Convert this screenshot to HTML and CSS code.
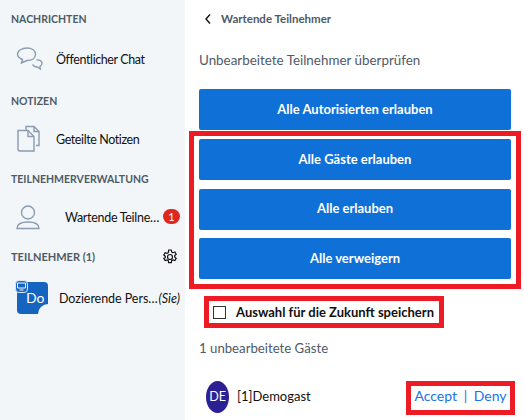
FILE: index.html
```html
<!DOCTYPE html>
<html lang="de">
<head>
    <meta charset="UTF-8">
    <title>Wartende Teilnehmer</title>
    <link rel="stylesheet" href="styles.css">
</head>
<body>

    <!-- Sidebar -->
    <div class="sidebar">
        <h3 class="first">NACHRICHTEN</h3>
        <div class="item">
            <svg class="icon" width="28" height="28" viewBox="0 0 28 28" fill="none" stroke="#8b9bb0" stroke-width="1.4">
                <path d="M11 3c5 0 8.500 2.500 8.500 6.300s-3.500 6.200-8.500 6.200l-5.500 2.500 1-3.500C4 13.500 1.500 12 1.500 9.300 1.500 5.500 6 3 11 3z"/>
                <path d="M20.500 15c3-.5 5.500 1 5.500 3.300 0 1.500-1 2.500-2 3l.3 2.700-3-2c-2.300 0-4-1-4.800-2.500"/>
            </svg>
            <span class="label">Öffentlicher Chat</span>
        </div>
        <h3 class="notes-head">NOTIZEN</h3>
        <div class="item">
            <svg class="icon" width="28" height="28" viewBox="0 0 28 28" fill="none" stroke="#8b9bb0" stroke-width="1.4">
                <path d="M10 5V1.500h8l5 5V20.500h-3"/>
                <path d="M2 5.500h10l6 6v14.500H4a2 2 0 0 1-2-2z"/>
                <path d="M12 5.500v6h6M18 1.500v5h5"/>
            </svg>
            <span class="label">Geteilte Notizen</span>
        </div>
        <h3>TEILNEHMERVERWALTUNG</h3>
        <div class="item">
            <svg class="icon person" width="24" height="26" viewBox="0 0 24 26" fill="none" stroke="#8b9bb0" stroke-width="1.4">
                <circle cx="12" cy="8.500" r="6.500"/>
                <path d="M1 24.500c0-4 4-6.500 11-6.500s11 2.500 11 6.500z"/>
            </svg>
            <span class="label wait-label">Wartende Teilne…</span>
            <span class="badge">1</span>
        </div>
        <div class="users-head">
            <h3>TEILNEHMER (1)</h3>
            <svg width="16" height="16" viewBox="0 0 16 16" fill="none" stroke="#111" stroke-width="1.200">
                <path d="M6.700 1h2.600l.4 2 1.300.7 1.900-.7 1.300 2.300-1.500 1.300v1.400l1.500 1.300-1.300 2.300-1.900-.7-1.300.7-.4 2H6.700l-.4-2-1.300-.7-1.900.7-1.300-2.300L3.300 8.700V7.300L1.800 6l1.300-2.300 1.900.7 1.300-.7z"/>
                <circle cx="8" cy="8" r="2.500"/>
            </svg>
        </div>
        <div class="user">
            <div class="avatar">Do
                <span class="presenter">
                    <svg width="9" height="9" viewBox="0 0 9 9" fill="none" stroke="#fff"><path d="M.5 1h8v5h-8zM2.500 8h4"/></svg>
                </span>
                <span class="notch"></span>
            </div>
            <span class="user-name">Dozierende Pers…</span><em class="you">(Sie)</em>
        </div>
    </div>

    <!-- Main -->
    <div class="main">
        <div class="back">
            <svg width="8" height="12" viewBox="0 0 8 12" fill="none" stroke="#111" stroke-width="1.400"><path d="M6 1.500 2 6l4 4.500"/></svg>
            <span>Wartende Teilnehmer</span>
        </div>
        <div class="lead">Unbearbeitete Teilnehmer überprüfen</div>
        <button class="btn">Alle Autorisierten erlauben</button>
        <div class="mark mark-buttons">
            <button class="btn">Alle Gäste erlauben</button>
            <button class="btn">Alle erlauben</button>
            <button class="btn">Alle verweigern</button>
        </div>
        <div class="mark mark-check">
            <span class="check"></span>
            <span>Auswahl für die Zukunft speichern</span>
        </div>
        <div class="count">1 unbearbeitete Gäste</div>
        <div class="guest">
            <div class="guest-avatar">DE</div>
            <span class="guest-name">[1]Demogast</span>
            <div class="mark mark-actions">Accept <span class="sep">|</span> Deny</div>
        </div>
    </div>

</body>
</html>
```
FILE: styles.css
```css
* {
    box-sizing: border-box;
    margin: 0;
    padding: 0;
}

body {
    font-family: "Lato", sans-serif;
    background-color: #fff;
    color: #111;
    display: flex;
    width: 524px;
    height: 420px;
    overflow: hidden;
}

/* Sidebar */
.sidebar {
    width: 185px;
    height: 420px;
    flex-shrink: 0;
    background-color: #f3f6f9;
    padding: 12px 0 0 11px;
}

.sidebar h3 {
    font-size: 10.500px;
    line-height: 14px;
    font-weight: 700;
    color: #4e5a66;
    margin-top: 8px;
    white-space: nowrap;
}

.sidebar h3.first {
    margin-top: 0;
    margin-bottom: 8px;
}

.sidebar h3.notes-head {
    margin-top: 10px;
}

.item {
    display: flex;
    align-items: center;
    height: 50px;
    margin-top: 6px;
    position: relative;
}

.sidebar h3.first + .item {
    margin-top: 0;
}

.icon {
    margin-left: 5px;
    flex-shrink: 0;
}

.person {
    margin-right: 4px;
}

.label {
    font-size: 12.500px;
    letter-spacing: -0.4px;
    white-space: nowrap;
    margin-left: 12px;
}

.wait-label {
    margin-left: 21px;
    letter-spacing: -0.3px;
}

.badge {
    position: absolute;
    left: 152px;
    top: 17px;
    width: 17px;
    height: 15px;
    border-radius: 8px;
    background-color: #df2721;
    color: #fff;
    font-size: 11px;
    line-height: 15px;
    text-align: center;
}

.users-head {
    display: flex;
    justify-content: space-between;
    align-items: center;
    width: 167px;
    height: 16px;
    margin-top: 7px;
}

.users-head h3 {
    margin-top: 0;
    font-size: 11px;
}

.user {
    display: flex;
    align-items: center;
    margin: 17px 0 0 6px;
}

.avatar {
    position: relative;
    width: 31px;
    height: 32px;
    border-radius: 4px;
    background-color: #1565c0;
    color: #fff;
    font-size: 14px;
    line-height: 32px;
    padding-left: 9px;
    margin-right: 11px;
    flex-shrink: 0;
}

.presenter {
    position: absolute;
    left: -2px;
    top: -2px;
    width: 13px;
    height: 13px;
    border-radius: 4px;
    background-color: #1565c0;
    border: 1px solid #dbe8f6;
    display: flex;
    align-items: center;
    justify-content: center;
}

.notch {
    position: absolute;
    right: -10px;
    bottom: -10px;
    width: 20px;
    height: 20px;
    border-radius: 50%;
    background-color: #f3f6f9;
}

.user-name {
    font-size: 12.500px;
    letter-spacing: -0.05px;
    white-space: nowrap;
}

.you {
    font-size: 12.500px;
    margin-left: 1px;
}

/* Main */
.main {
    flex: 1;
    display: flex;
    flex-direction: column;
    align-items: flex-start;
    padding: 12px 0 0 14px;
}

.back {
    display: flex;
    align-items: center;
    gap: 9px;
    font-size: 11.500px;
    line-height: 14px;
    font-weight: 700;
    color: #4e5a66;
    margin-left: 5px;
}

.lead {
    font-size: 13.400px;
    line-height: 18px;
    color: #4e5a66;
    margin-top: 25px;
}

.btn {
    display: block;
    width: 312px;
    height: 41px;
    flex-shrink: 0;
    border: none;
    border-radius: 2px;
    background-color: #0f70d7;
    color: #fff;
    font-family: inherit;
    font-size: 13px;
    font-weight: 700;
    padding-bottom: 2px;
}

.main > .btn {
    margin-top: 20px;
}

.mark {
    border: 5px solid #ed1c24;
}

.mark-buttons {
    display: flex;
    flex-direction: column;
    gap: 8.500px;
    width: 332px;
    margin: 1px 0 0 -10px;
    padding: 3px 5px 5px;
}

.mark-check {
    display: flex;
    align-items: center;
    gap: 10px;
    width: 240px;
    height: 32px;
    margin: 7px 0 0 5px;
    padding-left: 4px;
    font-size: 13px;
    font-weight: 700;
    white-space: nowrap;
}

.check {
    width: 13px;
    height: 13px;
    border: 1px solid #333;
    flex-shrink: 0;
}

.count {
    font-size: 13.200px;
    line-height: 18px;
    color: #4e5a66;
    margin-top: 11px;
}

.guest {
    display: flex;
    align-items: center;
    width: 316px;
    margin-top: 24px;
    padding-left: 7px;
}

.guest-avatar {
    width: 23px;
    height: 32px;
    margin-bottom: 2px;
    border-radius: 50%;
    background-color: #2d1f94;
    color: #fff;
    font-size: 12.500px;
    line-height: 32px;
    text-align: center;
}

.guest-name {
    font-size: 13px;
    margin: 0 0 4px 8px;
}

.mark-actions {
    margin-left: auto;
    width: 109px;
    height: 34px;
    line-height: 20px;
    font-size: 14px;
    text-align: center;
    color: #1a73e8;
    white-space: nowrap;
}

.sep {
    margin: 0 3px;
}
```
